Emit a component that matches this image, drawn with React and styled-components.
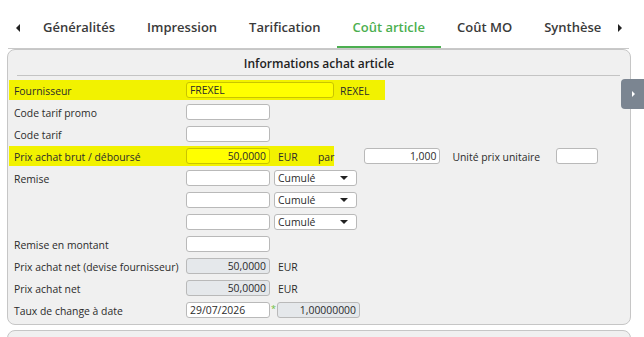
import React from "react";
import styled, { createGlobalStyle, css } from "styled-components";

const GlobalStyle = createGlobalStyle`
  html, body { margin: 0; padding: 0; background: #ffffff; }
  body { font-family: "Open Sans", "Noto Sans", sans-serif; color: #2b2b2b; }
  * { box-sizing: border-box; }
`;

const Page = styled.div`
  width: 644px;
  height: 337px;
  overflow: hidden;
  position: relative;
`;

const TabBar = styled.div`
  display: flex;
  align-items: stretch;
  height: 49px;
  margin: 0 15px 0 8px;
  border-bottom: 1px solid #c9c9c9;
  overflow: hidden;
`;

const ArrowBox = styled.div`
  flex: 0 ${(p) => (p.$left ? 0 : 1)} ${(p) => p.$w}px;
  display: flex;
  align-items: center;
  justify-content: ${(p) => (p.$left ? "center" : "flex-start")};
  padding: 7px 0 0 ${(p) => (p.$left ? 0 : 1)}px;
`;

const Tab = styled.div`
  flex-shrink: 0;
  padding: 7px 16px 0;
  display: flex;
  align-items: center;
  font-size: 13px;
  font-weight: 600;
  color: #3a3a3a;
  border-bottom: 3px solid transparent;
  margin-bottom: -1px;
  white-space: nowrap;
  ${(p) =>
    p.$active &&
    css`
      color: #4caf50;
      border-bottom-color: #4caf50;
    `}
`;

const Panel = styled.div`
  position: relative;
  margin-left: 7px;
  width: 624px;
  background: #f0f0f0;
  border: 1px solid #c6c6c6;
  border-radius: 8px;
  padding-bottom: 3px;
`;

const NextPanel = styled.div`
  margin: 5px 0 0 7px;
  width: 624px;
  height: 30px;
  background: #f0f0f0;
  border: 1px solid #c6c6c6;
  border-radius: 8px 8px 0 0;
`;

const Title = styled.div`
  height: 25px;
  padding-top: 2px;
  display: flex;
  align-items: center;
  justify-content: center;
  font-size: 12px;
  font-weight: 600;
  color: #1e1e1e;
`;

const Separator = styled.div`
  height: 1px;
  margin: 0 10px 0 9px;
  background: #c4c4c4;
`;

const Rows = styled.div`
  padding-top: 3px;
  display: flex;
  flex-direction: column;
`;

const Row = styled.div`
  display: flex;
  align-items: center;
  height: 20px;
  margin: 1px 0 1px 1px;
`;

const Band = styled.div`
  display: flex;
  align-items: center;
  height: 20px;
  background: ${(p) => (p.$hl ? "#f2f200" : "transparent")};
  padding-right: ${(p) => p.$pr || 0}px;
`;

const Label = styled.div`
  flex-shrink: 0;
  width: 177px;
  padding: 1px 0 0 5px;
  font-size: 10.4px;
  color: #2b2b2b;
  white-space: nowrap;
`;

const Field = styled.div`
  flex-shrink: 0;
  width: ${(p) => p.$w || 84}px;
  height: 16px;
  border: 1px solid ${(p) => (p.$hl ? "#c9c400" : "#b9b9b9")};
  border-radius: 3px;
  background: ${(p) => (p.$hl ? "#ffff00" : p.$disabled ? "#e5e8eb" : "#ffffff")};
  font-size: 10.4px;
  line-height: 14px;
  padding: 0 3px;
  color: #2b2b2b;
  text-align: ${(p) => (p.$right ? "right" : "left")};
  margin-left: ${(p) => p.$ml || 0}px;
  white-space: nowrap;
  overflow: hidden;
`;

const Text = styled.span`
  flex-shrink: 0;
  font-size: 10.4px;
  padding-top: 1px;
  color: #2b2b2b;
  margin-left: ${(p) => p.$ml || 0}px;
  width: ${(p) => (p.$w ? `${p.$w}px` : "auto")};
  white-space: nowrap;
`;

const Select = styled.div`
  flex-shrink: 0;
  width: 83px;
  height: 16px;
  margin-left: 4px;
  border: 1px solid #b9b9b9;
  border-radius: 3px;
  background: #fff;
  font-size: 10.4px;
  line-height: 14px;
  padding: 0 3px;
  display: flex;
  align-items: center;
  justify-content: space-between;
`;

const Caret = styled.span`
  width: 0;
  height: 0;
  margin-right: 5px;
  border-left: 4px solid transparent;
  border-right: 4px solid transparent;
  border-top: 4px solid #222;
`;

const Star = styled.span`
  flex-shrink: 0;
  width: 7px;
  font-size: 9px;
  color: #6cbf3c;
  text-align: center;
  line-height: 9px;
  align-self: flex-start;
  margin-top: 4px;
`;

const SideTab = styled.div`
  position: absolute;
  left: 613px;
  top: 29px;
  width: 24px;
  height: 30px;
  background: #7b8591;
  border-radius: 4px 0 0 4px;
  display: flex;
  align-items: center;
  justify-content: center;
`;

const TriRight = ({ color = "#222", w = 4, h = 8 }) => (
  <svg width={w} height={h} viewBox={`0 0 ${w} ${h}`}>
    <polygon points={`0,0 ${w},${h / 2} 0,${h}`} fill={color} />
  </svg>
);
const TriLeft = ({ color = "#222", w = 4, h = 8 }) => (
  <svg width={w} height={h} viewBox={`0 0 ${w} ${h}`}>
    <polygon points={`${w},0 0,${h / 2} ${w},${h}`} fill={color} />
  </svg>
);

const tabs = ["Généralités", "Impression", "Tarification", "Coût article", "Coût MO", "Synthèse"];

export default function App() {
  return (
    <Page>
      <GlobalStyle />
      <TabBar>
        <ArrowBox $w={19} $left>
          <TriLeft />
        </ArrowBox>
        {tabs.map((t) => (
          <Tab key={t} $active={t === "Coût article"}>
            {t}
          </Tab>
        ))}
        <ArrowBox $w={12}>
          <TriRight />
        </ArrowBox>
      </TabBar>
      <Panel>
        <Title>Informations achat article</Title>
        <Separator />
        <SideTab>
          <TriRight color="#fff" w={3} h={6} />
        </SideTab>
        <Rows>
          <Row>
            <Band $hl $pr={16}>
              <Label>Fournisseur</Label>
              <Field $w={148} $hl>FREXEL</Field>
              <Text $ml={6}>REXEL</Text>
            </Band>
          </Row>
          <Row>
            <Label>Code tarif promo</Label>
            <Field />
          </Row>
          <Row>
            <Label>Code tarif</Label>
            <Field />
          </Row>
          <Row>
            <Band $hl>
              <Label>Prix achat brut / déboursé</Label>
              <Field $hl $right>50,0000</Field>
              <Text $ml={8} $w={40}>EUR</Text>
              <Text>par</Text>
            </Band>
            <Field $ml={30} $w={76} $right>1,000</Field>
            <Text $ml={12} $w={104}>Unité prix unitaire</Text>
            <Field $w={42} />
          </Row>
          <Row>
            <Label>Remise</Label>
            <Field />
            <Select>Cumulé<Caret /></Select>
          </Row>
          <Row>
            <Label />
            <Field />
            <Select>Cumulé<Caret /></Select>
          </Row>
          <Row>
            <Label />
            <Field />
            <Select>Cumulé<Caret /></Select>
          </Row>
          <Row>
            <Label>Remise en montant</Label>
            <Field />
          </Row>
          <Row>
            <Label>Prix achat net (devise fournisseur)</Label>
            <Field $disabled $right>50,0000</Field>
            <Text $ml={8}>EUR</Text>
          </Row>
          <Row>
            <Label>Prix achat net</Label>
            <Field $disabled $right>50,0000</Field>
            <Text $ml={8}>EUR</Text>
          </Row>
          <Row>
            <Label>Taux de change à date</Label>
            <Field>29/07/2026</Field>
            <Star>*</Star>
            <Field $disabled $right $w={83}>1,00000000</Field>
          </Row>
        </Rows>
      </Panel>
      <NextPanel />
    </Page>
  );
}
